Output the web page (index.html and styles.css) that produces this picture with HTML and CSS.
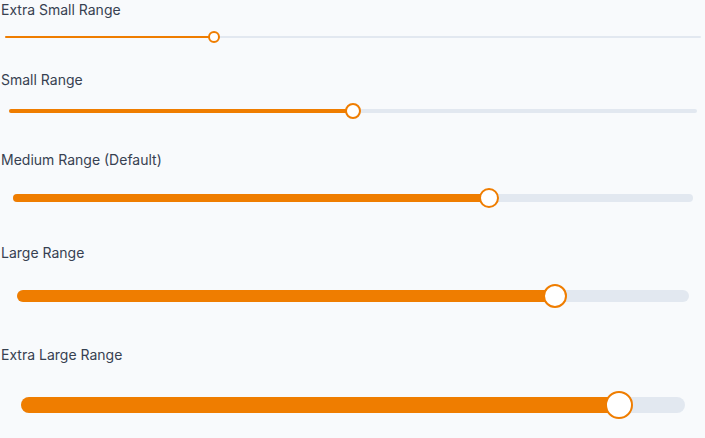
FILE: index.html
```html
<!DOCTYPE html>
<html lang="en">
<head>
<meta charset="utf-8">
<title>Range sizes</title>
<link rel="stylesheet" href="styles.css">
</head>
<body>
<main class="stack">
  <section class="field size-xs">
    <label class="label">Extra Small Range</label>
    <div class="range">
      <div class="track">
        <div class="fill" style="width:30%"></div>
        <div class="thumb" style="left:30%"></div>
      </div>
    </div>
  </section>
  <section class="field size-sm">
    <label class="label">Small Range</label>
    <div class="range">
      <div class="track">
        <div class="fill" style="width:50%"></div>
        <div class="thumb" style="left:50%"></div>
      </div>
    </div>
  </section>
  <section class="field size-md">
    <label class="label">Medium Range (Default)</label>
    <div class="range">
      <div class="track">
        <div class="fill" style="width:70%"></div>
        <div class="thumb" style="left:70%"></div>
      </div>
    </div>
  </section>
  <section class="field size-lg">
    <label class="label">Large Range</label>
    <div class="range">
      <div class="track">
        <div class="fill" style="width:80%"></div>
        <div class="thumb" style="left:80%"></div>
      </div>
    </div>
  </section>
  <section class="field size-xl">
    <label class="label">Extra Large Range</label>
    <div class="range">
      <div class="track">
        <div class="fill" style="width:90%"></div>
        <div class="thumb" style="left:90%"></div>
      </div>
    </div>
  </section>
</main>
</body>
</html>
```
FILE: styles.css
```css
html, body {
  margin: 0;
  padding: 0;
  background: #f8fafc;
}

body {
  font-family: Inter, "Liberation Sans", Arial, sans-serif;
  color: #374151;
  width: 705px;
  height: 438px;
  overflow: hidden;
}

.stack {
  display: flex;
  flex-direction: column;
}

.field {
  display: flex;
  flex-direction: column;
}

.label {
  display: block;
  font-size: 14px;
  line-height: 20px;
  padding-left: 1px;
}

.range {
  display: flex;
  align-items: center;
  height: var(--thumb);
  margin-top: var(--gap-top);
  padding-left: var(--inset);
  padding-right: calc(var(--inset) - 1px);
}

.track {
  position: relative;
  flex: 1;
  height: var(--track);
  border-radius: 999px;
  background: #e2e8f0;
}

.fill {
  height: 100%;
  border-radius: 999px;
  background: #ef7d00;
}

.thumb {
  position: absolute;
  top: 50%;
  width: var(--thumb);
  height: var(--thumb);
  box-sizing: border-box;
  border: 2px solid #ef7d00;
  border-radius: 50%;
  background: #ffffff;
  transform: translate(-50%, -50%);
}

.size-xs {
  --thumb: 12px;
  --track: 2px;
  --inset: 5px;
  --gap-top: 11px;
}

.size-sm {
  --thumb: 16px;
  --track: 4px;
  --inset: 9px;
  --gap-top: 13px;
  margin-top: 27px;
}

.size-md {
  --thumb: 20px;
  --track: 8px;
  --inset: 13px;
  --gap-top: 18px;
  margin-top: 31px;
}

.size-lg {
  --thumb: 24px;
  --track: 12px;
  --inset: 17px;
  --gap-top: 21px;
  margin-top: 35px;
}

.size-xl {
  --thumb: 28px;
  --track: 16px;
  --inset: 21px;
  --gap-top: 26px;
  margin-top: 37px;
}
```
